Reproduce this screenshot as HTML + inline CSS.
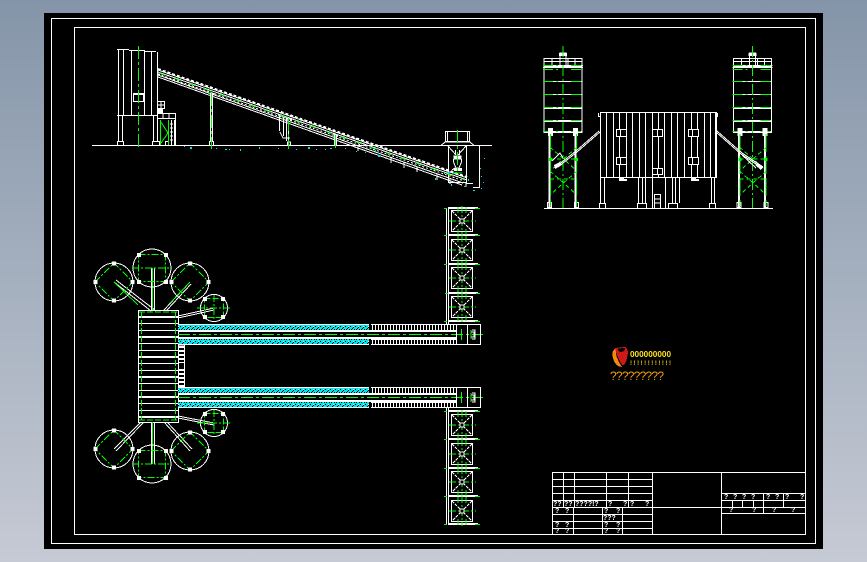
<!DOCTYPE html>
<html><head><meta charset="utf-8"><style>
html,body{margin:0;padding:0;width:867px;height:562px;overflow:hidden;background:linear-gradient(180deg,#8595a9 0%,#a5b0bf 50%,#c6cad4 100%)}
svg{position:absolute;left:0;top:0;display:block}
text{font-family:"Liberation Sans",sans-serif}
</style></head><body>
<svg width="867" height="562" viewBox="0 0 867 562" xmlns="http://www.w3.org/2000/svg" shape-rendering="crispEdges">
<defs>
<pattern id="dith" width="5" height="5" patternUnits="userSpaceOnUse"><rect width="5" height="5" fill="#00e6ee"/><rect x="0" y="1" width="1" height="1" fill="#000"/><rect x="2" y="3" width="1" height="1" fill="#000"/><rect x="3" y="2" width="1" height="1" fill="#000"/><rect x="1" y="4" width="1" height="1" fill="#000"/><rect x="4" y="4" width="1" height="1" fill="#000"/><rect x="3" y="1" width="1" height="1" fill="#fff"/></pattern>
<pattern id="hat" width="3" height="6" patternUnits="userSpaceOnUse"><rect width="1" height="6" fill="#fff"/></pattern>

<g id="hop">
<rect x="451.5" y="-10.5" width="21" height="21" fill="none" stroke="#fff"/>
<path d="M452 -10L472 10M472 -10L452 10" stroke="#fff" stroke-dasharray="3 1" fill="none"/>
<path d="M449 0H476M462 -15V15" stroke="#0f0" stroke-dasharray="7 2 2 2" fill="none"/>
<path d="M458 -14V-8M466 -14V-8M458 8V14M466 8V14" stroke="#0f0" fill="none"/>
<rect x="460" y="-2" width="4" height="4" fill="#000" stroke="#fff"/>
</g>

<g id="silo">
<rect x="-19" y="0.5" width="38" height="66" fill="none" stroke="#fff"/>
<path d="M-19 15.5H19M-19 28.5H19M-19 41.5H19M-19 42.5H19M-19 54.5H19M-19 55.5H19M-19 65.5H19" stroke="#fff"/>
<path d="M-20 -0.5H20M-20 1.5H20" stroke="#fff"/>
<rect x="-19" y="-7.5" width="38" height="7" fill="none" stroke="#fff"/>
<path d="M-19 -4.5H19M-11 -7V0M-3 -7V0M5 -7V0M12 -7V0" stroke="#fff"/>
<rect x="-3" y="-13" width="6" height="13" fill="none" stroke="#fff"/><rect x="-4" y="-13" width="8" height="3" fill="#fff"/>
<path d="M-20 -0.5H21M-20 3.5H21M-20 15.5H21M-20 28.5H21M-20 41.5H21M-20 54.5H21M-20 65.5H21" stroke="#0f0" stroke-dasharray="10 3 2 13"/>
<path d="M-14 67V141M-13 67V141M12 67V141M13 67V141" stroke="#fff"/>
<rect x="-15" y="62" width="5" height="8" fill="#fff"/><rect x="10" y="62" width="5" height="8" fill="#fff"/>
<rect x="-15.5" y="136.5" width="4" height="5" fill="none" stroke="#fff"/><rect x="11.5" y="136.5" width="4" height="5" fill="none" stroke="#fff"/>
<path d="M-13 81L14 105M14 81L-13 105M-13 105L14 129M14 105L-13 129M-13 93H14M-13 113H14" stroke="#0f0" stroke-dasharray="4 3" fill="none"/>
<path d="M-12.5 68V140M13.5 68V140" stroke="#0f0" stroke-dasharray="18 4" fill="none"/>
<path d="M0 -20V143" stroke="#0f0" stroke-dasharray="11 3 2 3" fill="none"/>
<rect x="-14" y="92" width="3" height="3" fill="#0f0"/><rect x="12" y="92" width="3" height="3" fill="#0f0"/>
</g>

<g id="big"><circle r="19" fill="none" stroke="#fff"/><path d="M-19 0L0 -19L19 0L0 19Z" stroke="#0f0" stroke-dasharray="7 2 2 2" fill="none"/>
<rect x="-20.5" y="-2" width="4" height="4" fill="#fff"/><rect x="16.5" y="-2" width="4" height="4" fill="#fff"/><rect x="-2" y="-20.5" width="4" height="4" fill="#fff"/><rect x="-2" y="16.5" width="4" height="4" fill="#fff"/></g>
<g id="big2"><circle r="19" fill="none" stroke="#fff"/><rect x="-13.5" y="-13.5" width="27" height="27" stroke="#0f0" stroke-dasharray="7 2 2 2" fill="none"/><path d="M-20 0H20" stroke="#0f0" stroke-dasharray="7 2 2 2"/>
<rect x="-15" y="-15" width="4" height="4" fill="#fff"/><rect x="12" y="-15" width="4" height="4" fill="#fff"/><rect x="-15" y="12" width="4" height="4" fill="#fff"/><rect x="12" y="12" width="4" height="4" fill="#fff"/></g>
<g id="small"><circle r="13.5" fill="none" stroke="#fff"/><rect x="-9.5" y="-9.5" width="19" height="19" stroke="#0f0" stroke-dasharray="6 2" fill="none"/><path d="M-17 0H16M0 -13V13" stroke="#0f0" stroke-dasharray="7 2 2 2"/>
<rect x="-11" y="-11" width="4" height="4" fill="#fff"/><rect x="7" y="-11" width="4" height="4" fill="#fff"/><rect x="-11" y="7" width="4" height="4" fill="#fff"/><rect x="7" y="7" width="4" height="4" fill="#fff"/></g>

<g id="conv">
<rect x="178" y="0" width="191" height="5" fill="url(#dith)"/>
<rect x="178" y="14" width="191" height="5" fill="url(#dith)"/>
<path d="M178 -0.5H369M178 19.5H369" stroke="#fff"/>
<path d="M178 5.5H456M178 6.5H456M178 13.5H456M178 12.5H456" stroke="#fff"/>
<rect x="371" y="0" width="85" height="5" fill="url(#hat)"/><rect x="371" y="14" width="85" height="5" fill="url(#hat)"/>
<path d="M371 -0.5H456M371 5.5H456M371 14.5H456M371 19.5H456" stroke="#fff"/>
<path d="M178 9.5H483" stroke="#0f0" stroke-dasharray="12 3 3 3"/>
<rect x="456.5" y="-0.5" width="24" height="20" fill="none" stroke="#fff"/>
<path d="M467.5 0V19M472 5H475V14H472M471 7H474V12H471" stroke="#fff" fill="none"/><path d="M461.5 4V15M471 5V14" stroke="#0f0" fill="none"/>
</g>
</defs>

<!-- sheet -->
<rect x="44" y="13" width="779" height="536" fill="#000"/>
<rect x="51.5" y="18.5" width="764" height="525" fill="none" stroke="#fff"/>
<rect x="74.5" y="27.5" width="731" height="507" fill="none" stroke="#fff"/>

<!-- side elevation -->
<g fill="none" stroke="#fff">
<path d="M92 145.5H492"/>
<path d="M118.5 50V115M157.5 52V141M123.5 50V115M131.5 50V115M144.5 51V115M151.5 51V115M117 49.5H129M129 50.5H145M145 51.5H156M117 115.5H158"/>
<path d="M118.5 115V141M122.5 115V141M153.5 115V141M157.5 115V141"/>
<rect x="117.5" y="141.5" width="6" height="4"/><rect x="152.5" y="141.5" width="7" height="4"/>
<rect x="133.5" y="94.5" width="10" height="7"/><path d="M133 93.5H144M133 101.5H144"/>
<rect x="157.5" y="101.5" width="7" height="7"/><path d="M158 105H164M161 101V108"/>
<rect x="158" y="108" width="5" height="6" fill="#fff" stroke="none"/>
<path d="M157 113.5H175M157 118.5H175M163 113V118M169 113V118M175.5 113V145M160.5 120V145M168.5 120V145"/>
<rect x="170" y="120" width="5" height="25" fill="url(#hat)" stroke="none"/>
<path d="M170 124H176M170 128H176M170 132H176M170 136H176M170 140H176" stroke="#fff" stroke-dasharray="1 1"/>
<rect x="165.5" y="141.5" width="3" height="4"/>
<path d="M210.5 93V141M212.5 93V141"/><rect x="209.5" y="141.5" width="4" height="4"/>
<path d="M279.5 114V131M283.5 118V136M280 132L283 138H290M286.5 118V141M288.5 118V141"/><rect x="287.5" y="142" width="3" height="3"/>
<path d="M334.5 135V145M336.5 135V145"/>
<!-- conveyor -->
<path d="M158 70L467 178M158 72L467 180M158 75L463 183M158 77L462 185"/>
<path d="M158 74L464 181" stroke-dasharray="2 2"/>
<path d="M158 69L467 177" stroke-dasharray="3 2" stroke-width="2"/>
<path d="M358 146V151M391 157V163M404 162V168M417 167V172M437 174V180M450 178V184"/>
<path d="M210 93L216 94M278 115L292 120M333 134L338 136"/>
<!-- pit -->
<rect x="445.5" y="131.5" width="24" height="10"/>
<path d="M447.5 132V141M467.5 132V141M441 145.5L445 142H470L474 145.5"/>
<rect x="448.5" y="145.5" width="18" height="37"/>
<path d="M448 146L456 155M466 146L458 155M455.5 150V155M459.5 150V155"/>
<rect x="453.5" y="155.5" width="8" height="4" fill="#fff" stroke="none"/>
<path d="M453.5 159V162L456 168H459L461.5 162V159M455 168L452 170M459 168L462 170"/>
<rect x="454" y="168" width="8" height="3" fill="#fff" stroke="none"/>
<path d="M479.5 145V187M473 187.5H480M473 183.5H466V187"/>
</g>
<path d="M138.5 46V150M211.5 93V149M288.5 118V149M335.5 135V150M457.5 130V172" fill="none" stroke="#0f0" stroke-dasharray="13 3 3 3"/>
<path d="M160.5 120V145M168.5 120V145" stroke="#0f0" fill="none"/>
<path d="M161 122L168 133L161 143" fill="none" stroke="#0f0"/>
<path d="M159 73L465 180" fill="none" stroke="#0f0" stroke-dasharray="7 9"/>
<path d="M453 173H462" stroke="#0f0"/>
<path fill="#00e6ee" d="M190 147h2v2h-2zM216 148h1v1h-1zM225 149h2v1h-2zM229 149h1v1h-1zM240 149h1v2h-1zM259 147h1v2h-1zM278 148h1v1h-1zM296 149h1v1h-1zM308 147h2v2h-2zM316 149h1v1h-1zM325 149h1v1h-1zM330 148h2v1h-2zM345 148h1v1h-1zM356 151h1v1h-1zM365 152h1v1h-1zM375 150h1v2h-1zM378 155h2v2h-2zM396 157h1v1h-1zM404 160h1v1h-1zM415 165h1v1h-1zM424 171h1v1h-1zM435 178h1v2h-1zM448 172h1v2h-1zM468 179h1v2h-1zM481 188h1v1h-1zM484 158h1v1h-1zM480 168h1v1h-1zM481 176h1v1h-1zM483 182h1v1h-1zM473 190h2v1h-2zM464 186h1v1h-1zM451 184h1v2h-1zM444 173h1v1h-1zM422 160h1v1h-1zM184 146h1v1h-1z"/>

<!-- front elevation -->
<use href="#silo" x="563" y="66"/>
<use href="#silo" x="752.5" y="66"/>
<g fill="none" stroke="#fff">
<path d="M544 208.5H773"/>
<rect x="600.5" y="112.5" width="115" height="65"/>
<path d="M598.5 113V116.5H600M717.5 113V116.5H716M716.5 112V178"/>
<path d="M606.5 113V178M613.5 113V178M619.5 113V178M626.5 113V178M632.5 113V178M639.5 113V178M645.5 113V178M652.5 113V178M658.5 113V178M664.5 113V178M671.5 113V178M677.5 113V178M684.5 113V178M691.5 113V178M697.5 113V178M704.5 113V178M710.5 113V178"/>
<rect x="616.5" y="129.5" width="10" height="7" fill="#000"/><rect x="652.5" y="129.5" width="10" height="7" fill="#000"/><rect x="688.5" y="129.5" width="10" height="7" fill="#000"/>
<rect x="616.5" y="157.5" width="10" height="7" fill="#000"/><rect x="652.5" y="168.5" width="10" height="6" fill="#000"/><rect x="688.5" y="157.5" width="10" height="7" fill="#000"/>
<path d="M620.5 130V137M657.5 130V137M692.5 130V137M620.5 158V165M692.5 158V165M657.5 169V174"/>
<path d="M600.5 178V203M604.5 178V203M638.5 178V203M642.5 178V203M645.5 178V203M672.5 178V203M675.5 178V203M679.5 178V203M711.5 178V203M714.5 178V203M652.5 178V208M665.5 178V208"/>
<rect x="599.5" y="203.5" width="6" height="5"/><rect x="637.5" y="203.5" width="9" height="5"/><rect x="668.5" y="203.5" width="9" height="5"/><rect x="709.5" y="203.5" width="6" height="5"/>
<rect x="654.5" y="194.5" width="6" height="14"/><path d="M655 199H660M655 203H660"/>
<path d="M600 132L577 152L558 167M599 131L576 151L557 166" stroke-width="1"/>
<path d="M716 132L741 154L762 168M717 131L742 153L763 167"/>
<path d="M552 161L560 153L563 158M742 155L756 168"/>
</g>
<path d="M622 179h5v2h-5zM694 179h5v2h-5zM554 165l6-3 2 3-7 4zM757 163l6 4-2 3-6-5z" fill="#fff"/>
<rect x="619" y="178" width="5" height="3" fill="#fff"/><rect x="691" y="178" width="5" height="3" fill="#fff"/>

<!-- plan -->
<g fill="none" stroke="#fff">
<rect x="138.5" y="310.5" width="40" height="112"/>
<path d="M139 316.5H178M139 317.5H178M139 323.5H178M139 330.5H178M139 336.5H178M139 337.5H178M139 343.5H178M139 350.5H178M139 356.5H178M139 357.5H178M139 363.5H178M139 370.5H178M139 376.5H178M139 377.5H178M139 383.5H178M139 390.5H178M139 396.5H178M139 397.5H178M139 403.5H178M139 410.5H178M139 416.5H178M139 417.5H178"/>
<path d="M151 311L114 282M156 311L116 280M151.5 310V268M154.5 310V268M164 310L190 282M167 310L191 284M178 316L214 308M178 318L214 310"/>
<path d="M140 423L114 449M143 423L116 451M151.5 422V464M154.5 422V464M164 422L190 451M167 422L192 449M178 416L214 423M178 418L214 425"/>
<rect x="178.5" y="345" width="6" height="43"/>
</g>
<path d="M179 346h6v2h-6zM179 350h6v2h-6zM179 354h6v2h-6zM179 358h6v2h-6zM179 362h6v1h-6zM179 369h6v2h-6zM179 373h6v2h-6zM179 377h6v2h-6zM179 381h6v2h-6zM179 385h6v2h-6z" fill="#fff"/>
<path d="M141.5 312V420M175.5 312V420M139 312H178M139 420H178" stroke="#0f0" fill="none" stroke-dasharray="6 2"/>
<path d="M152.5 268V310M152.5 422V464M114 282L138 305M190 282L170 303" stroke="#0f0" fill="none"/>
<use href="#big2" x="152" y="268"/>
<use href="#big" x="114" y="282"/>
<use href="#big" x="190" y="282"/>
<use href="#small" x="214" y="308"/>
<use href="#big" x="114" y="449"/>
<use href="#big2" x="152" y="464"/>
<use href="#big" x="190" y="451"/>
<use href="#small" x="214" y="423"/>
<use href="#conv" y="325"/>
<use href="#conv" y="388"/>

<!-- hoppers -->
<g fill="none" stroke="#fff">
<path d="M446.5 208V324M448.5 208V324M446.5 408V525M448.5 408V525"/>
<path d="M448 207.5H478M448 208.5H478M448 234.5H478M448 235.5H478M448 263.5H478M448 264.5H478M448 292.5H478M448 293.5H478M448 320.5H478M448 321.5H478"/>
<path d="M448 410.5H478M448 411.5H478M448 438.5H478M448 439.5H478M448 467.5H478M448 468.5H478M448 495.5H478M448 496.5H478M448 523.5H478M448 524.5H478"/>
</g>
<path d="M444 208.5H480M444 235.5H480M444 264.5H480M445 293.5H480M444 321.5H480M444 411.5H480M444 439.5H480M444 468.5H480M444 496.5H480M444 524.5H480" stroke="#0f0" stroke-dasharray="3 28 5 0" fill="none"/>
<use href="#hop" y="221"/><use href="#hop" y="250"/><use href="#hop" y="278"/><use href="#hop" y="307"/>
<use href="#hop" y="425"/><use href="#hop" y="454"/><use href="#hop" y="482"/><use href="#hop" y="511"/>

<!-- logo -->
<path d="M613 358C611 353 613 350 616 348C615 353 617 360 622 367C617 367 614 363 613 358Z" fill="#f08a10"/>
<path d="M615 348L625 347C629 349 628 354 627 358C626 362 625 366 622 365C619 360 616 354 615 348Z" fill="#d01818"/>
<path d="M618 348.5L625 348C626 350 623 352 621 352C619 352 618 350 618 348.5Z" fill="#000"/>
<text x="630" y="357" font-size="8" font-weight="bold" fill="#ffe21a" textLength="41" lengthAdjust="spacingAndGlyphs">000000000</text>
<text x="630" y="365" font-size="6" font-weight="bold" fill="#e0c810" textLength="41" lengthAdjust="spacing">!!!!!!!!!!!!</text>
<text x="610" y="380" font-size="12" fill="#f09a10" textLength="54" lengthAdjust="spacing">?????????</text>

<!-- title block -->
<g fill="none" stroke="#fff">
<path d="M552.5 472V534M563.5 472V507M574.5 472V507M606.5 472V507M628.5 472V507M652.5 472V534M721.5 472V534"/>
<path d="M552 472.5H805M552 479.5H652M552 486.5H652M552 493.5H652M552 500.5H652M552 507.5H805M552 514.5H652M552 521.5H652M552 528.5H652"/>
<path d="M573.5 507V534M602.5 507V534M622.5 507V534"/>
<path d="M721 493.5H805M721 500.5H805M721 513.5H805M763.5 493V514M783.5 493V507M732.5 500V507M742.5 500V507M753.5 500V507"/>
</g>
<g font-size="7" fill="#fff" font-weight="bold">
<text x="553" y="506">??</text><text x="564" y="506">??</text><text x="575" y="506">????!?</text><text x="608" y="506">?</text><text x="623" y="506">?</text><text x="630" y="506">?</text><text x="645" y="506">?</text>
<text x="555" y="513">?</text><text x="565" y="513">?</text><text x="604" y="513">?</text><text x="616" y="513">?</text>
<text x="603" y="520">???</text>
<text x="555" y="527">?</text><text x="565" y="527">?</text><text x="604" y="527">?</text><text x="616" y="527">?</text>
<text x="555" y="533">?</text><text x="565" y="533">?</text><text x="604" y="533">?</text><text x="616" y="533">?</text>
<text x="724" y="499">?</text><text x="733" y="499">?</text><text x="742" y="499">?</text><text x="751" y="499">?</text><text x="766" y="499">?</text><text x="775" y="499">?</text><text x="785" y="499">?</text><text x="800" y="499">?</text>
<text x="729" y="512">?</text><text x="752" y="512">?</text><text x="772" y="512">?</text><text x="791" y="512">?</text>
</g>
</svg>
</body></html>
